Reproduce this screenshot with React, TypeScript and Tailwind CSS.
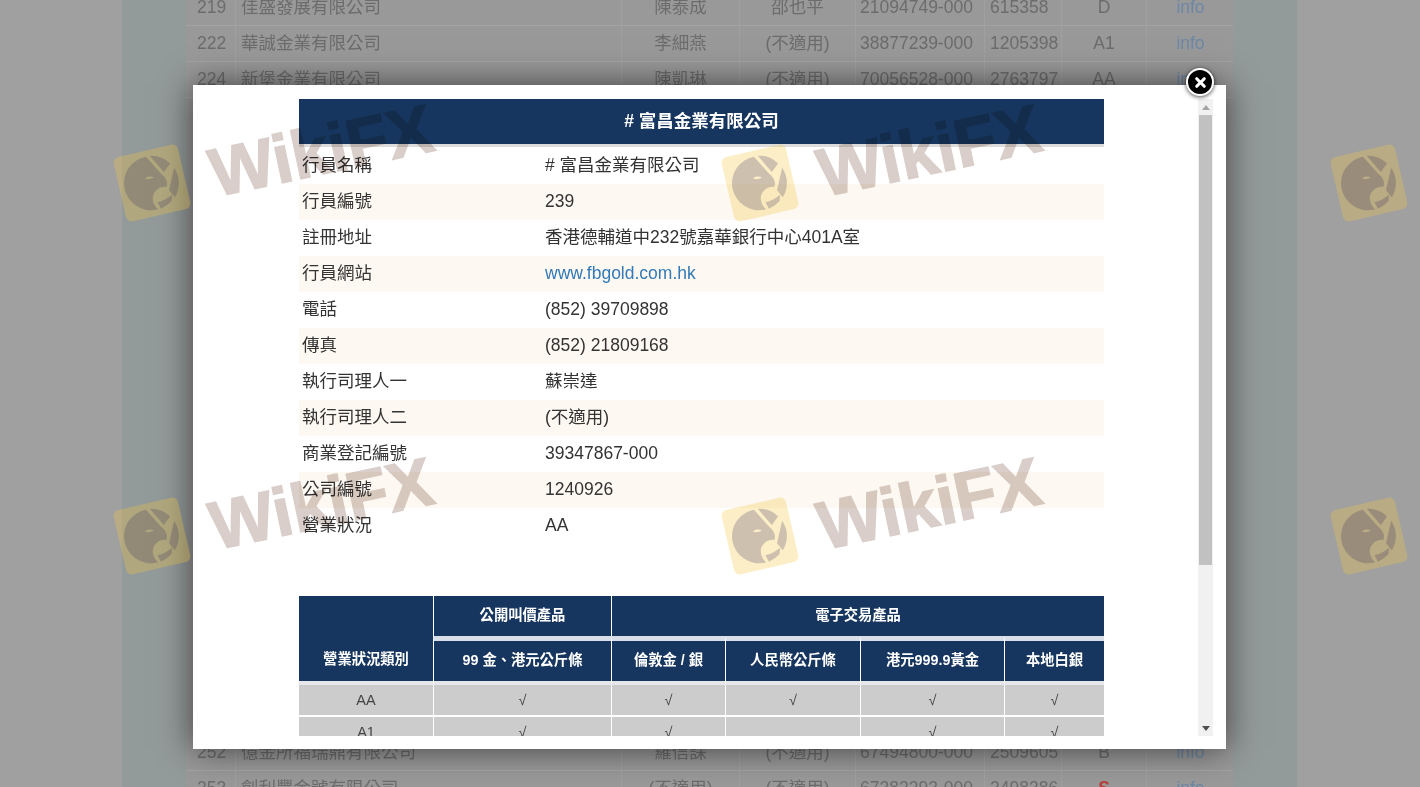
import { X } from "lucide-react";

const font = "font-['Liberation_Sans','Noto_Sans_CJK_TC',sans-serif]";

const details: [string, string][] = [
  ["行員名稱", "# 富昌金業有限公司"],
  ["行員編號", "239"],
  ["註冊地址", "香港德輔道中232號嘉華銀行中心401A室"],
  ["行員網站", "www.fbgold.com.hk"],
  ["電話", "(852) 39709898"],
  ["傳真", "(852) 21809168"],
  ["執行司理人一", "蘇崇達"],
  ["執行司理人二", "(不適用)"],
  ["商業登記編號", "39347867-000"],
  ["公司編號", "1240926"],
  ["營業狀況", "AA"],
];

const topRows = [
  ["219", "佳盛發展有限公司", "陳泰成", "邵也平", "21094749-000", "615358", "D"],
  ["222", "華誠金業有限公司", "李細燕", "(不適用)", "38877239-000", "1205398", "A1"],
  ["224", "新堡金業有限公司", "陳凱琳", "(不適用)", "70056528-000", "2763797", "AA"],
];

const bottomRows = [
  ["252", "億金所福瑞鼎有限公司", "羅信誄", "(不適用)", "67494800-000", "2509605", "B"],
  ["253", "創利豐金號有限公司", "(不適用)", "(不適用)", "67382293-000", "2498386", "S"],
];

function BackRow({ row }: { row: string[] }) {
  return (
    <div className="grid h-[36px] grid-cols-[50px_386px_118px_116px_129px_77px_85px_86px] items-stretch border-b border-[#a4a4a4] text-[17.5px] leading-[35px] text-[#6c6c6c]">
      <div className="border-r border-[#a0a0a0] pl-[11px]">{row[0]}</div>
      <div className="border-r border-[#a0a0a0] pl-[5px]">{row[1]}</div>
      <div className="border-r border-[#a0a0a0] text-center">{row[2]}</div>
      <div className="border-r border-[#a0a0a0] text-center">{row[3]}</div>
      <div className="border-r border-[#a0a0a0] pl-[4px]">{row[4]}</div>
      <div className="border-r border-[#a0a0a0] pl-[5px]">{row[5]}</div>
      <div className={row[6] === "S" ? "border-r border-[#a0a0a0] text-center font-bold text-[#b5403c]" : "border-r border-[#a0a0a0] text-center"}>{row[6]}</div>
      <div className="pl-px text-center text-[#6d87a6]">info</div>
    </div>
  );
}

function Eagle() {
  return (
    <svg viewBox="-30 -30 60 60" className="h-[60px] w-[60px]" fill="rgba(40,30,90,0.22)">
      {/* head and neck, with the eye cut out */}
      <path fillRule="evenodd" d="M0 -27 A27 27 0 0 0 -2 27 L0 27 C-4 21 -4 14 0 10 C4 6 9 5 13 7 C16 3 15 -2 11 -7 Z M-6 -6 C-3 -8 1 -7 3 -5 C0 -4 -3 -4 -6 -6 Z" />
      {/* aperture blades */}
      <path d="M4 -27 A27 27 0 0 1 22 -15 L14 -8 Z" />
      <path d="M25 -10 A27 27 0 0 1 19 19 L15 11 Z" />
      <path d="M15 22 A27 27 0 0 1 3 27 L1 20 C6 20 11 19 17 16 Z" />
    </svg>
  );
}

function Logo({ className }: { className: string }) {
  return (
    <div className={`absolute flex h-[66px] w-[66px] rotate-[-13deg] items-center justify-center rounded-[6px] bg-[#f5c842]/30 ${className}`}>
      <Eagle />
    </div>
  );
}

function Mark({ className }: { className: string }) {
  return (
    <span className={`absolute rotate-[-12deg] font-['Liberation_Sans',sans-serif] text-[68px] leading-none font-bold text-[#d9cec9] mix-blend-multiply [-webkit-text-stroke:1.5px_#d9cec9] ${className}`}>
      WikiFX
    </span>
  );
}

export default function App() {
  return (
    <div className={`relative flex h-[787px] overflow-hidden bg-[#a0a0a0] ${font}`}>
      <div className="w-[122px] shrink-0" />
      <div className="w-[64px] shrink-0 bg-[#939a9a]" />
      <div className="-mt-[10px] w-[1047px] shrink-0 bg-[#999999]">
        {topRows.map((r) => (
          <BackRow key={r[0]} row={r} />
        ))}
        <div className="h-[637px]" />
        {bottomRows.map((r) => (
          <BackRow key={r[0]} row={r} />
        ))}
      </div>
      <div className="w-[64px] shrink-0 bg-[#939a9a]" />

      {/* modal */}
      <div className="absolute top-[85px] left-[193px] flex h-[664px] w-[1033px] bg-white pt-[14px] pr-[13px] pb-[13px] pl-[106px] shadow-[0_0_32px_rgba(0,0,0,0.6)]">
        <div className="h-[637px] w-[805px] shrink-0 overflow-hidden">
          <div className="h-[45px] bg-[#17365f] text-center text-[17.5px] leading-[45px] font-bold text-white">
            # 富昌金業有限公司
          </div>
          <div className="h-[4px] border-t-[3px] border-[#dcdcdc]" />
          <table className="w-full table-fixed border-collapse text-[17.5px] text-[#333]">
            <tbody>
              {details.map(([k, v], i) => (
                <tr key={k} className={i % 2 ? "h-[36px] border-b border-white bg-[#fdf8f1]" : "h-[36px]"}>
                  <td className="w-[242px] pb-[2px] pl-[3px]">{k}</td>
                  <td className={k === "行員網站" ? "pb-[2px] pl-[4px] text-[#337ab7]" : "pb-[2px] pl-[4px]"}>{v}</td>
                </tr>
              ))}
            </tbody>
          </table>

          <table className="mt-[52px] w-full table-fixed border-separate border-spacing-0 text-center text-[14.3px] text-white">
            <colgroup>
              <col className="w-[134px]" />
              <col className="w-[178px]" />
              <col className="w-[114px]" />
              <col className="w-[135px]" />
              <col className="w-[144px]" />
              <col className="w-[100px]" />
            </colgroup>
            <thead className="font-bold">
              <tr>
                <th rowSpan={2} className="border-b-[4px] border-[#e6e7ea] bg-[#17365f] pb-[11px] align-bottom">營業狀況類別</th>
                <th className="h-[40px] border-l border-white bg-[#17365f]">公開叫價產品</th>
                <th colSpan={4} className="h-[40px] border-l border-white bg-[#17365f]">電子交易產品</th>
              </tr>
              <tr>
                {["99 金、港元公斤條", "倫敦金 / 銀", "人民幣公斤條", "港元999.9黃金", "本地白銀"].map((h) => (
                  <th key={h} className="h-[49px] border-t-[5px] border-b-[4px] border-l border-[#e6e7ea] border-t-[#d9dfe9] border-l-white bg-[#17365f]">
                    {h}
                  </th>
                ))}
              </tr>
            </thead>
            <tbody className="text-[14.5px] text-[#444]">
              {[
                ["AA", "√", "√", "√", "√", "√"],
                ["A1", "√", "√", "", "√", "√"],
              ].map((row) => (
                <tr key={row[0]}>
                  {row.map((c, i) => (
                    <td key={i} className={i ? "h-[32px] border-b-2 border-l border-white bg-[#cccccc] pt-[2px]" : "h-[32px] border-b-2 border-white bg-[#cccccc] pt-[2px]"}>
                      {c}
                    </td>
                  ))}
                </tr>
              ))}
            </tbody>
          </table>
        </div>

        <div className="ml-auto flex h-[637px] w-[15px] flex-col bg-[#f1f1f1] px-px">
          <div className="flex h-[16px] items-center justify-center">
            <svg viewBox="0 0 8 5" className="h-[5px] w-[8px]"><path d="M4 0 8 5H0Z" fill="#a3a3a3" /></svg>
          </div>
          <div className="h-[450px] bg-[#c1c1c1]" />
          <div className="mt-auto flex h-[16px] items-center justify-center">
            <svg viewBox="0 0 8 5" className="h-[5px] w-[8px]"><path d="M0 0H8L4 5Z" fill="#505050" /></svg>
          </div>
        </div>
      </div>

      {/* close button */}
      <button className="absolute top-[68px] left-[1186px] flex h-[28px] w-[28px] items-center justify-center rounded-full border-2 border-white bg-black shadow-[0_1px_4px_rgba(0,0,0,0.7)]">
        <X className="h-[15px] w-[15px] text-white" strokeWidth={5} />
      </button>

      {/* watermarks */}
      <Logo className="top-[150px] left-[119px]" />
      <Logo className="top-[150px] left-[727px]" />
      <Logo className="top-[150px] left-[1336px]" />
      <Logo className="top-[503px] left-[119px]" />
      <Logo className="top-[503px] left-[727px]" />
      <Logo className="top-[503px] left-[1336px]" />
      <Mark className="top-[116px] left-[208px]" />
      <Mark className="top-[116px] left-[816px]" />
      <Mark className="top-[469px] left-[208px]" />
      <Mark className="top-[469px] left-[816px]" />
    </div>
  );
}
